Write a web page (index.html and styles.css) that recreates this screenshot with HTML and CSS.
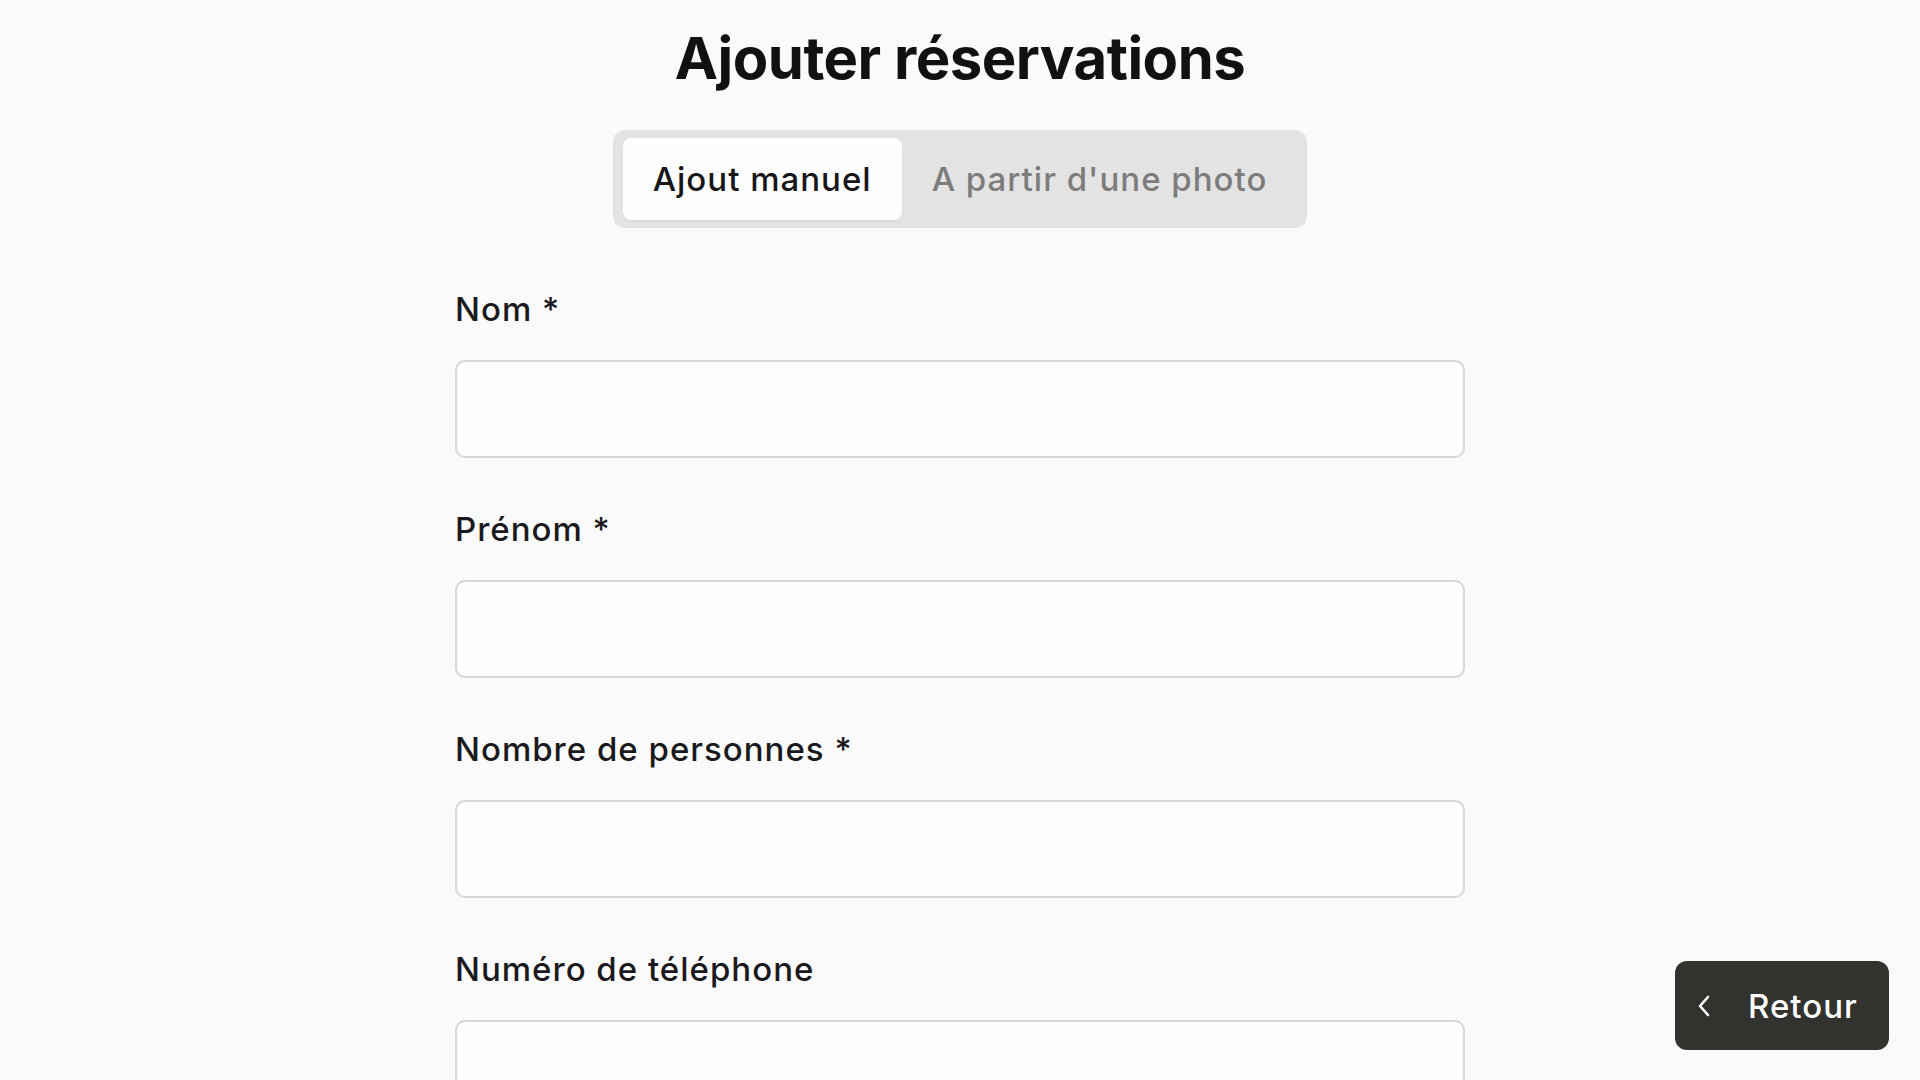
FILE: index.html
```html
<!DOCTYPE html>
<html lang="fr">
<head>
<meta charset="utf-8">
<title>Ajouter réservations</title>
<link rel="stylesheet" href="styles.css">
</head>
<body>
<main class="page">
  <h1 class="title">Ajouter réservations</h1>
  <div class="tabs">
    <button class="tab tab-active" type="button">Ajout manuel</button>
    <button class="tab" type="button">A partir d'une photo</button>
  </div>
  <form class="form">
    <div class="field">
      <label class="label" for="nom">Nom <span class="req">*</span></label>
      <input class="input" id="nom" type="text">
    </div>
    <div class="field">
      <label class="label" for="prenom">Prénom <span class="req">*</span></label>
      <input class="input" id="prenom" type="text">
    </div>
    <div class="field">
      <label class="label" for="nb">Nombre de personnes <span class="req">*</span></label>
      <input class="input" id="nb" type="text">
    </div>
    <div class="field">
      <label class="label" for="tel">Numéro de téléphone</label>
      <input class="input" id="tel" type="text">
    </div>
  </form>
</main>
<button class="back" type="button">
  <svg class="back-icon" width="16" height="24" viewBox="0 0 16 24" aria-hidden="true"><path d="M12 3 L4 12 L12 21" fill="none" stroke="#ffffff" stroke-width="2.6" stroke-linecap="round" stroke-linejoin="round"/></svg>
  <span>Retour</span>
</button>
</body>
</html>
```
FILE: styles.css
```css
* { box-sizing: border-box; }
html, body { margin: 0; padding: 0; }
body {
  background: #fafafa;
  font-family: Inter, "Liberation Sans", Arial, sans-serif;
  color: #17171a;
}
.page {
  display: flex;
  flex-direction: column;
  align-items: center;
  padding-bottom: 200px;
}
.title {
  margin: 29px 0 0;
  font-size: 58px;
  line-height: 58px;
  font-weight: 700;
  letter-spacing: -0.5px;
  color: #111111;
}
.tabs {
  display: flex;
  margin-top: 43px;
  padding: 8px 10px;
  background: #e3e3e3;
  border-radius: 12px;
}
.tab {
  height: 82px;
  padding: 0 30px;
  border: 0;
  background: transparent;
  border-radius: 8px;
  font-family: inherit;
  font-size: 33px;
  letter-spacing: 1px;
  font-weight: 500;
  color: #7c7c7c;
}
.tab-active {
  background: #fefefe;
  color: #17171a;
  box-shadow: 0 1px 2px rgba(0,0,0,0.06);
}
.form {
  width: 1010px;
  margin-top: 61px;
  display: flex;
  flex-direction: column;
  gap: 51px;
}
.field {
  display: flex;
  flex-direction: column;
  gap: 31px;
}
.label {
  font-size: 33px;
  line-height: 40px;
  letter-spacing: 1px;
  font-weight: 500;
  color: #1a1a1e;
}
.req { color: #1a1a1e; }
.input {
  height: 98px;
  border: 2px solid #d6d6dd;
  border-radius: 10px;
  background: #fdfdfe;
  font-family: inherit;
  font-size: 32px;
  padding: 0 20px;
}
.back {
  position: fixed;
  right: 31px;
  bottom: 30px;
  width: 214px;
  height: 89px;
  display: flex;
  align-items: center;
  gap: 36px;
  padding: 0 0 0 21px;
  border: 0;
  border-radius: 12px;
  background: #32322f;
  color: #ffffff;
  font-family: inherit;
  font-size: 33px;
  letter-spacing: 1px;
  font-weight: 500;
}
.back-icon { display: block; flex: none; }
```
